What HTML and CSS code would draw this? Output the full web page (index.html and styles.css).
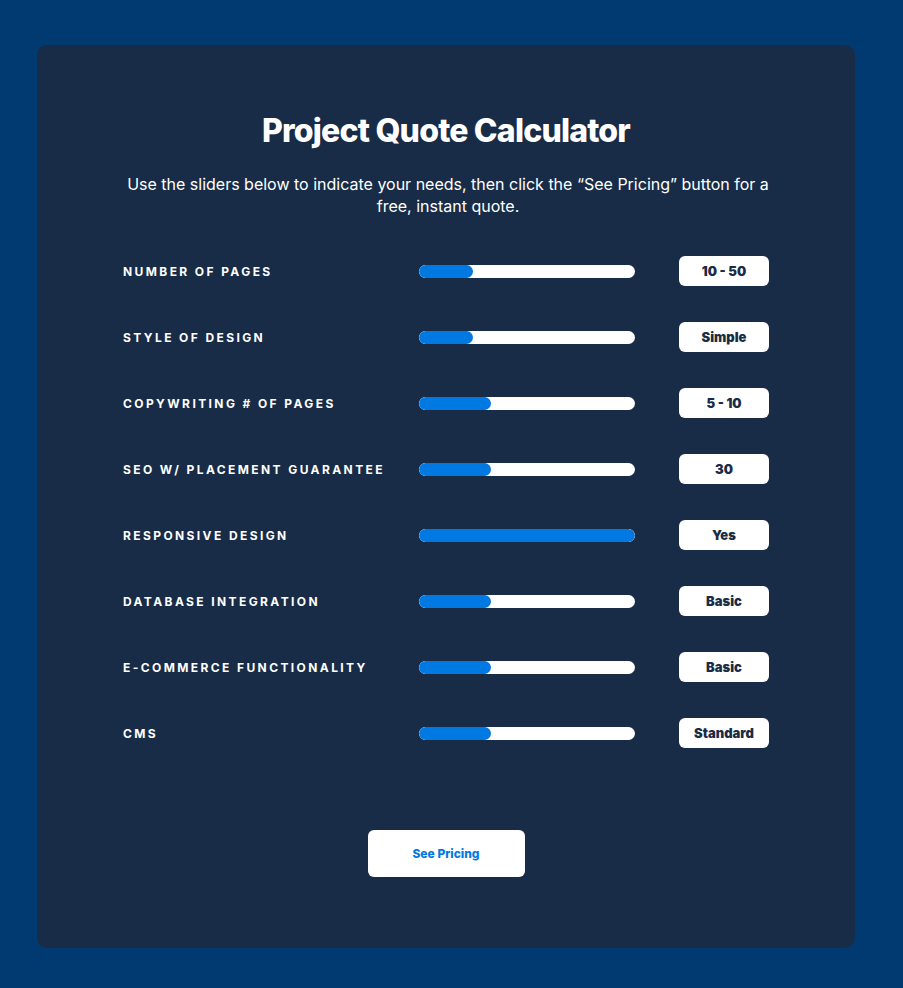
FILE: index.html
```html
<!DOCTYPE html>
<html>
<head>
<meta charset="utf-8">
<link rel="stylesheet" href="styles.css">
</head>
<body>
<div class="card">
  <h1 class="title">Project Quote Calculator</h1>
  <p class="intro">Use the sliders below to indicate your needs, then click the “See Pricing” button for a free, instant quote.</p>
  <div class="rows">
    <div class="row"><span class="label">Number of pages</span><div class="track"><div class="fill" style="width:25%"></div></div><span class="value">10 - 50</span></div>
    <div class="row"><span class="label">Style of design</span><div class="track"><div class="fill" style="width:25%"></div></div><span class="value">Simple</span></div>
    <div class="row"><span class="label">Copywriting # of pages</span><div class="track"><div class="fill" style="width:33.3%"></div></div><span class="value">5 - 10</span></div>
    <div class="row"><span class="label">SEO w/ placement guarantee</span><div class="track"><div class="fill" style="width:33.3%"></div></div><span class="value">30</span></div>
    <div class="row"><span class="label">Responsive design</span><div class="track"><div class="fill" style="width:100%"></div></div><span class="value">Yes</span></div>
    <div class="row"><span class="label">Database integration</span><div class="track"><div class="fill" style="width:33.3%"></div></div><span class="value">Basic</span></div>
    <div class="row"><span class="label">E-commerce functionality</span><div class="track"><div class="fill" style="width:33.3%"></div></div><span class="value">Basic</span></div>
    <div class="row"><span class="label">CMS</span><div class="track"><div class="fill" style="width:33.3%"></div></div><span class="value">Standard</span></div>
  </div>
  <div class="actions"><button class="btn">See Pricing</button></div>
</div>
</body>
</html>
```
FILE: styles.css
```css
html, body { margin: 0; padding: 0; }
body {
  background: #003a70;
  font-family: Inter, "Liberation Sans", sans-serif;
  padding: 45px 48px 40px 37px;
}
.card {
  background: #182c47;
  border-radius: 10px;
  width: 818px;
  height: 903px;
  box-sizing: border-box;
  padding: 66px 86px 0;
  color: #fff;
}
.title {
  margin: 0;
  text-align: center;
  font-size: 32px;
  font-weight: 800;
  letter-spacing: -0.8px;
  line-height: 40px;
}
.intro {
  margin: 22px auto 0;
  width: 650px;
  text-align: center;
  font-size: 16px;
  line-height: 22px;
}
.rows {
  margin-top: 39px;
  display: flex;
  flex-direction: column;
  gap: 36px;
}
.row {
  display: grid;
  grid-template-columns: 252px 216px 90px;
  column-gap: 44px;
  align-items: center;
  height: 30px;
}
.label {
  font-size: 12px;
  font-weight: 700;
  letter-spacing: 2.4px;
  text-transform: uppercase;
  white-space: nowrap;
}
.track {
  height: 13px;
  background: #fff;
  border-radius: 7px;
  overflow: hidden;
}
.fill {
  height: 100%;
  background: #0079e3;
  border-radius: 7px;
}
.value {
  height: 30px;
  background: #fff;
  border-radius: 6px;
  color: #182c47;
  font-size: 13px;
  font-weight: 900;
  display: flex;
  align-items: center;
  justify-content: center;
}
.actions {
  margin-top: 82px;
  display: flex;
  justify-content: center;
}
.btn {
  width: 157px;
  height: 47px;
  background: #fff;
  border: none;
  border-radius: 6px;
  color: #0079e3;
  font-family: Inter, "Liberation Sans", sans-serif;
  font-size: 12px;
  font-weight: 800;
}
```
